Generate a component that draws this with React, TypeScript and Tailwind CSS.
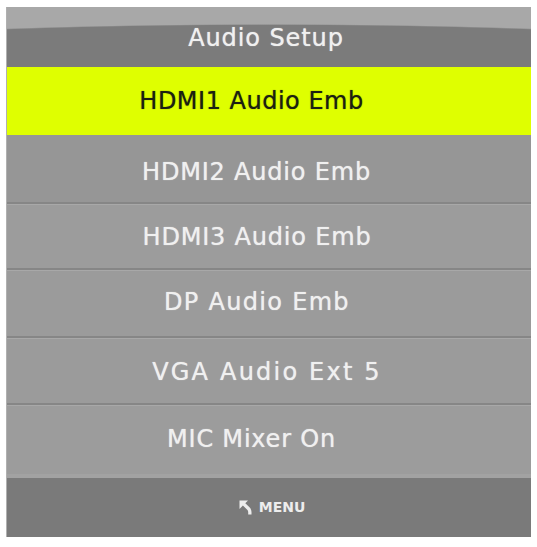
import React from "react";

const rows: { label: string; h: string; pad: string; bg: string; tr: string }[] = [
  { label: "HDMI2 Audio Emb", h: "h-[67px]", pad: "pr-[25px] pt-[7px]", bg: "bg-[#969696]", tr: "tracking-[0.8px]" },
  { label: "HDMI3 Audio Emb", h: "h-[66px]", pad: "pr-[24px] pt-[1px]", bg: "bg-[#9c9c9c]", tr: "tracking-[0.8px]" },
  { label: "DP Audio Emb", h: "h-[68px]", pad: "pr-[24px] pb-[4px]", bg: "bg-[#9b9b9b]", tr: "tracking-[1.3px]" },
  { label: "VGA Audio Ext 5", h: "h-[67px]", pad: "pr-[4px] pt-[1px]", bg: "bg-[#9b9b9b]", tr: "tracking-[2.2px]" },
  { label: "MIC Mixer On", h: "h-[75px]", pad: "pr-[35px] pb-[3px]", bg: "bg-[#9c9c9c]", tr: "tracking-[0.8px]" },
];

function ReturnIcon() {
  return (
    <svg width="17" height="15" viewBox="0 0 17 15" className="shrink-0">
      <path d="M0.5 0.5 L9 0.5 L6.3 3.2 L10.5 7.3 Q12.5 9.3 12.5 12 L12.5 14.5 L9.2 14.5 L9.2 12.2 Q9.2 10.8 8.2 9.8 L3.9 5.6 L0.5 9 Z" fill="#ededed" />
    </svg>
  );
}

export default function App() {
  return (
    <div className="w-[537px] h-[547px] bg-white pt-[7px] pl-[6px]" style={{ fontFamily: '"DejaVu Sans", sans-serif' }}>
      <div className="w-[525px] h-[530px] flex flex-col border-l border-[#b0b0b0]">
        <div className="h-[60px] flex items-center justify-center pt-[2px] bg-[radial-gradient(600px_43px_at_50%_100%,#7b7b7b_97%,#a8a8a8_100%)]">
          <span className="text-[24px] tracking-[0.9px] text-[#f0f0f0] pr-[6px] [text-shadow:0_0_1px_rgba(255,255,255,0.7)]">Audio Setup</span>
        </div>
        <div className="h-[68px] flex items-center justify-center bg-[#dfff00] pr-[35px]">
          <span className="text-[24px] tracking-[0.5px] text-[#1c1f12] [text-shadow:0_0_1px_rgba(20,25,0,0.7)]">HDMI1 Audio Emb</span>
        </div>
        {rows.map((r, i) => (
          <div key={r.label} className={`${r.h} ${r.bg} flex flex-col`}>
            {i > 0 && (
              <>
                <div className="h-[2px] bg-[#868686]" />
                <div className="h-px bg-[#a8a8a8]" />
              </>
            )}
            <div className={`flex-1 flex items-center justify-center ${r.pad}`}>
              <span className={`text-[24px] ${r.tr} text-[#f0f0f0] [text-shadow:0_0_1px_rgba(255,255,255,0.7)]`}>{r.label}</span>
            </div>
            {i === rows.length - 1 && <div className="h-[4px] bg-[#a2a2a2]" />}
          </div>
        ))}
        <div className="flex-1 bg-[#7a7a7a] flex items-center justify-center gap-[3px] pl-[6px]">
          <ReturnIcon />
          <span className="text-[14px] font-bold text-[#ededed]" style={{ fontFamily: '"DejaVu Sans", sans-serif' }}>MENU</span>
        </div>
      </div>
    </div>
  );
}
